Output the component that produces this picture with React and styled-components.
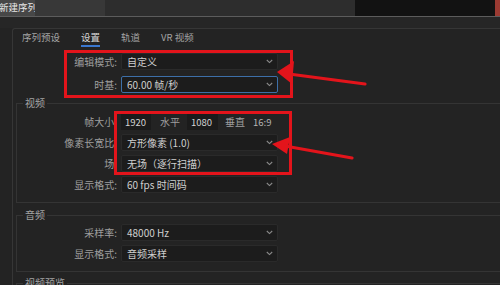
import React from "react";
import styled, { createGlobalStyle } from "styled-components";

const Global = createGlobalStyle`
  html, body { margin: 0; padding: 0; background: #232323; }
  body { font-family: "Noto Sans CJK SC", "Noto Sans", sans-serif; }
  * { box-sizing: border-box; }
`;

const Screen = styled.div`
  position: relative;
  width: 500px;
  height: 285px;
  overflow: hidden;
  background: #232323;
`;

const TitleBar = styled.div`
  display: flex;
  height: 16px;
`;

const TitleText = styled.div`
  background: #474747;
  color: #e6e6e6;
  font-size: 9.5px;
  line-height: 15px;
  padding: 0 2px 0 0;
  margin-left: -1px;
  width: 36px;
  white-space: nowrap;
`;

const TitleFill = styled.div`
  background: ${(p) => p.$bg};
  width: ${(p) => (p.$w ? `${p.$w}px` : "auto")};
  flex: ${(p) => (p.$w ? "none" : 1)};
`;

const TitleRule = styled.div`
  height: 1px;
  background: #5c5c5c;
`;

const TopStrip = styled.div`
  height: 11px;
  background: #262626;
`;

const Body = styled.div`
  padding-left: 12px;
`;

const Panel = styled.div`
  width: 520px;
  border-left: 1px solid #363636;
  border-top: 1px solid #363636;
  border-top-left-radius: 3px;
`;

const Tabs = styled.div`
  display: flex;
  height: 18px;
  padding-left: 9px;
  gap: 21px;
`;

const Tab = styled.div`
  font-size: 9.5px;
  line-height: 16px;
  height: 18px;
  color: ${(p) => (p.$active ? "#d8d8d8" : "#a4a4a4")};
  border-bottom: 2px solid ${(p) => (p.$active ? "#3a78d0" : "transparent")};
  white-space: nowrap;
`;

const Rows = styled.div`
  display: flex;
  flex-direction: column;
  gap: ${(p) => p.$gap}px;
  padding-top: ${(p) => p.$top || 0}px;
`;

const Row = styled.div`
  display: grid;
  grid-template-columns: ${(p) => p.$labelW}px 157px;
  column-gap: 4px;
  align-items: center;
  height: 17px;
`;

const Label = styled.div`
  text-align: right;
  font-size: 10px;
  color: #9e9e9e;
  white-space: nowrap;
`;

const Select = styled.div`
  display: flex;
  align-items: center;
  justify-content: space-between;
  height: 17px;
  background: #1c1c1c;
  border: 1px solid ${(p) => (p.$focus ? "#3d6fa8" : "#2a2a2a")};
  border-radius: 2px;
  padding: 0 4px 0 5px;
  font-size: 10px;
  color: #cfcfcf;
  white-space: nowrap;
`;

const Chevron = () => (
  <svg width="7" height="5" viewBox="0 0 7 5">
    <path d="M0.8 1 L3.5 3.6 L6.2 1" fill="none" stroke="#8a8a8a" strokeWidth="1.1" />
  </svg>
);

const Group = styled.fieldset`
  margin: ${(p) => p.$mt}px 0 0 3px;
  padding: ${(p) => p.$pt}px 0 ${(p) => p.$pb}px 0;
  border: 1px solid #343434;
  min-width: 0;
`;

const Legend = styled.legend`
  margin-left: 6px;
  padding: 0 2px;
  font-size: 10px;
  line-height: 12px;
  color: #a4a4a4;
`;

const Inline = styled.div`
  display: flex;
  align-items: center;
  height: 17px;
`;

const NumBox = styled.div`
  width: ${(p) => p.$w}px;
  height: 16px;
  margin-left: ${(p) => p.$ml}px;
  background: #1b1b1b;
  color: #d4d4d4;
  font-size: 9.5px;
  line-height: 16px;
  padding-left: 4px;
`;

const Unit = styled.div`
  margin-left: ${(p) => p.$ml}px;
  font-size: ${(p) => p.$fs || 10}px;
  color: ${(p) => p.$c || "#9e9e9e"};
  white-space: nowrap;
`;

const Overlay = styled.svg`
  position: absolute;
  left: 0;
  top: 0;
  pointer-events: none;
`;

const Dropdown = ({ value, focus }) => (
  <Select $focus={focus}>
    <span>{value}</span>
    <Chevron />
  </Select>
);

export default function App() {
  const red = "#e3141b";
  return (
    <Screen>
      <Global />
      <TitleBar>
        <TitleText>新建序列</TitleText>
        <TitleFill $bg="#383838" $w={70} />
        <TitleFill $bg="#2d2d2d" />
        <TitleFill $bg="#121212" $w={140} />
        <TitleFill $bg="#9b3a32" $w={5} />
      </TitleBar>
      <TitleRule />
      <TopStrip />
      <Body>
        <Panel>
          <Tabs>
            <Tab>序列预设</Tab>
            <Tab $active>设置</Tab>
            <Tab>轨道</Tab>
            <Tab>VR 视频</Tab>
          </Tabs>
          <Rows $gap={6} $top={6}>
            <Row $labelW={104}>
              <Label>编辑模式:</Label>
              <Dropdown value="自定义" />
            </Row>
            <Row $labelW={104}>
              <Label>时基:</Label>
              <Dropdown value="60.00  帧/秒" focus />
            </Row>
          </Rows>
          <Group $mt={4} $pt={4} $pb={9}>
            <Legend>视频</Legend>
            <Rows $gap={4}>
              <Row $labelW={100}>
                <Label>帧大小:</Label>
                <Inline>
                  <NumBox $w={30} $ml={0}>1920</NumBox>
                  <Unit $ml={9}>水平</Unit>
                  <NumBox $w={31} $ml={7}>1080</NumBox>
                  <Unit $ml={7}>垂直</Unit>
                  <Unit $ml={8} $fs={9.5} $c="#b4b4b4">16:9</Unit>
                </Inline>
              </Row>
              <Row $labelW={100}>
                <Label>像素长宽比:</Label>
                <Dropdown value="方形像素 (1.0)" />
              </Row>
              <Row $labelW={100}>
                <Label>场:</Label>
                <Dropdown value="无场（逐行扫描）" />
              </Row>
              <Row $labelW={100}>
                <Label>显示格式:</Label>
                <Dropdown value="60 fps 时间码" />
              </Row>
            </Rows>
          </Group>
          <Group $mt={6} $pt={3} $pb={9}>
            <Legend>音频</Legend>
            <Rows $gap={4}>
              <Row $labelW={100}>
                <Label>采样率:</Label>
                <Dropdown value="48000 Hz" />
              </Row>
              <Row $labelW={100}>
                <Label>显示格式:</Label>
                <Dropdown value="音频采样" />
              </Row>
            </Rows>
          </Group>
          <Group $mt={5} $pt={4} $pb={9}>
            <Legend>视频预览</Legend>
          </Group>
        </Panel>
      </Body>
      <Overlay width="500" height="285" viewBox="0 0 500 285">
        <rect x="65.5" y="51.5" width="226" height="45" fill="none" stroke={red} strokeWidth="3" />
        <rect x="115.5" y="112.5" width="175" height="61" fill="none" stroke={red} strokeWidth="3" />
        <line x1="289" y1="74" x2="365" y2="84" stroke={red} strokeWidth="3.2" strokeLinecap="round" />
        <polygon points="277,72 294,61 292,84" fill={red} />
        <line x1="285" y1="146" x2="352" y2="158" stroke={red} strokeWidth="3.2" strokeLinecap="round" />
        <polygon points="272,144 290,137 287,154" fill={red} />
      </Overlay>
    </Screen>
  );
}
